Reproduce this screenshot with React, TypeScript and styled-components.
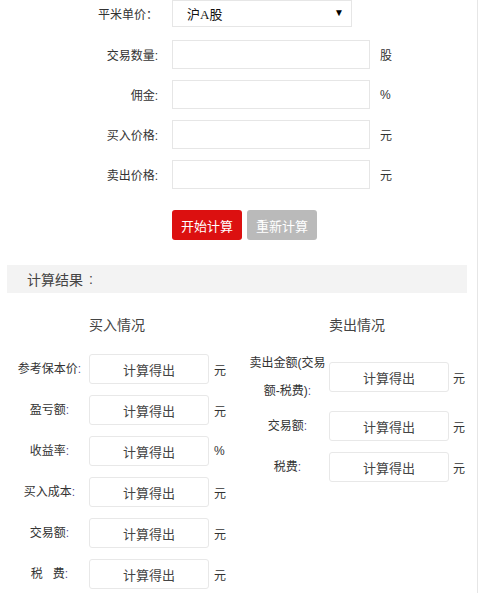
import React, { FunctionComponent } from 'react'
import styled, { createGlobalStyle } from 'styled-components'

const GlobalStyle = createGlobalStyle`
    html, body {
        margin: 0;
        padding: 0;
        background: #fff;
    }
    body {
        font-family: 'Liberation Sans', 'Noto Sans CJK SC', sans-serif;
        color: #333;
    }
`

const Page = styled.div`
    width: 477px;
    min-height: 593px;
    border-right: 1px solid #e6e6e6;
    box-sizing: content-box;
`

const Form = styled.div`
    display: flex;
    flex-direction: column;
`

const FormRow = styled.div<{ $gap?: number }>`
    display: flex;
    align-items: center;
    margin-bottom: ${(p) => p.$gap ?? 11}px;
`

const FormLabel = styled.label`
    width: 158px;
    margin-right: 14px;
    text-align: right;
    font-size: 12px;
    color: #333;
    white-space: nowrap;
`

const Select = styled.div`
    width: 180px;
    height: 27px;
    box-sizing: border-box;
    border: 1px solid #e6e6e6;
    display: flex;
    align-items: center;
    justify-content: space-between;
    padding: 0 7px 0 14px;
    font-size: 13px;
    font-family: 'Liberation Serif', 'Noto Sans CJK SC', serif;
    color: #111;
`

const Arrow = styled.span`
    font-size: 10px;
    color: #000;
    margin-top: -2px;
`

const TextInput = styled.input`
    width: 198px;
    height: 29px;
    box-sizing: border-box;
    border: 1px solid #e6e6e6;
    outline: none;
    padding: 0 8px;
    margin: 0;
    font-size: 12px;
`

const Unit = styled.span`
    margin-left: 10px;
    font-size: 12px;
    color: #333;
`

const Buttons = styled.div`
    display: flex;
    gap: 5px;
    padding-left: 172px;
    margin-top: 10px;
`

const Button = styled.button<{ $bg: string }>`
    width: 70px;
    height: 30px;
    border: none;
    border-radius: 3px;
    background: ${(p) => p.$bg};
    color: #fff;
    font-size: 13px;
    font-family: 'Liberation Sans', 'Noto Sans CJK SC', sans-serif;
    padding: 0;
    cursor: pointer;
`

const ResultBar = styled.div`
    margin: 25px 0 0 7px;
    width: 460px;
    height: 28px;
    background: #f3f3f3;
    display: flex;
    align-items: center;
    padding-left: 20px;
    box-sizing: border-box;
    font-size: 14px;
    color: #444;
`

const BarColon = styled.span`
    margin-left: 6px;
`

const Columns = styled.div`
    display: flex;
    margin-top: 17px;
`

const Column = styled.div<{ $width: number; $left: number }>`
    width: ${(p) => p.$width}px;
    margin-left: ${(p) => p.$left}px;
    display: flex;
    flex-direction: column;
`

const Heading = styled.div<{ $indent: number }>`
    padding-left: ${(p) => p.$indent}px;
    height: 30px;
    line-height: 30px;
    font-size: 14px;
    color: #444;
`

const ResultRow = styled.div<{ $top: number }>`
    display: flex;
    align-items: center;
    margin-top: ${(p) => p.$top}px;
`

const ResultLabel = styled.div<{ $width: number }>`
    width: ${(p) => p.$width}px;
    text-align: center;
    font-size: 12px;
    line-height: 28px;
    color: #333;
`

const Colon = styled.span`
    color: #5a4a9a;
`

const ResultBox = styled.div<{ $left?: number }>`
    width: 120px;
    height: 30px;
    margin-left: ${(p) => p.$left ?? 0}px;
    box-sizing: border-box;
    border: 1px solid #e8e8e8;
    border-radius: 3px;
    display: flex;
    align-items: center;
    justify-content: center;
    font-size: 13px;
    color: #444;
`

const ResultUnit = styled.span<{ $left: number }>`
    margin-left: ${(p) => p.$left}px;
    font-size: 12px;
    color: #333;
`

const buyRows = [
    { label: '参考保本价', unit: '元' },
    { label: '盈亏额', unit: '元' },
    { label: '收益率', unit: '%' },
    { label: '买入成本', unit: '元' },
    { label: '交易额', unit: '元' },
    { label: '税\u00a0\u00a0\u00a0费', unit: '元' },
]

const App: FunctionComponent = () => {
    return (
        <Page>
            <GlobalStyle />
            <Form>
                <FormRow $gap={13}>
                    <FormLabel>平米单价：</FormLabel>
                    <Select>
                        <span>沪A股</span>
                        <Arrow>▼</Arrow>
                    </Select>
                </FormRow>
                <FormRow>
                    <FormLabel>交易数量:</FormLabel>
                    <TextInput />
                    <Unit>股</Unit>
                </FormRow>
                <FormRow>
                    <FormLabel>佣金:</FormLabel>
                    <TextInput />
                    <Unit>%</Unit>
                </FormRow>
                <FormRow>
                    <FormLabel>买入价格:</FormLabel>
                    <TextInput />
                    <Unit>元</Unit>
                </FormRow>
                <FormRow>
                    <FormLabel>卖出价格:</FormLabel>
                    <TextInput />
                    <Unit>元</Unit>
                </FormRow>
            </Form>
            <Buttons>
                <Button $bg="#dc1010">开始计算</Button>
                <Button $bg="#bababa">重新计算</Button>
            </Buttons>
            <ResultBar>
                计算结果<BarColon>:</BarColon>
            </ResultBar>
            <Columns>
                <Column $width={230} $left={10}>
                    <Heading $indent={79}>买入情况</Heading>
                    {buyRows.map((r, i) => (
                        <ResultRow key={r.label} $top={i === 0 ? 14 : 11}>
                            <ResultLabel $width={79}>
                                {r.label}
                                <Colon>:</Colon>
                            </ResultLabel>
                            <ResultBox>计算得出</ResultBox>
                            <ResultUnit $left={5}>{r.unit}</ResultUnit>
                        </ResultRow>
                    ))}
                </Column>
                <Column $width={220} $left={9}>
                    <Heading $indent={80}>卖出情况</Heading>
                    <ResultRow $top={9}>
                        <ResultLabel $width={77}>
                            卖出金额(交易
                            <br />
                            额-税费)<Colon>:</Colon>
                        </ResultLabel>
                        <ResultBox $left={3}>计算得出</ResultBox>
                        <ResultUnit $left={4}>元</ResultUnit>
                    </ResultRow>
                    <ResultRow $top={6}>
                        <ResultLabel $width={77}>
                            交易额<Colon>:</Colon>
                        </ResultLabel>
                        <ResultBox $left={3}>计算得出</ResultBox>
                        <ResultUnit $left={4}>元</ResultUnit>
                    </ResultRow>
                    <ResultRow $top={11}>
                        <ResultLabel $width={77}>
                            税费<Colon>:</Colon>
                        </ResultLabel>
                        <ResultBox $left={3}>计算得出</ResultBox>
                        <ResultUnit $left={4}>元</ResultUnit>
                    </ResultRow>
                </Column>
            </Columns>
        </Page>
    )
}

export default App
